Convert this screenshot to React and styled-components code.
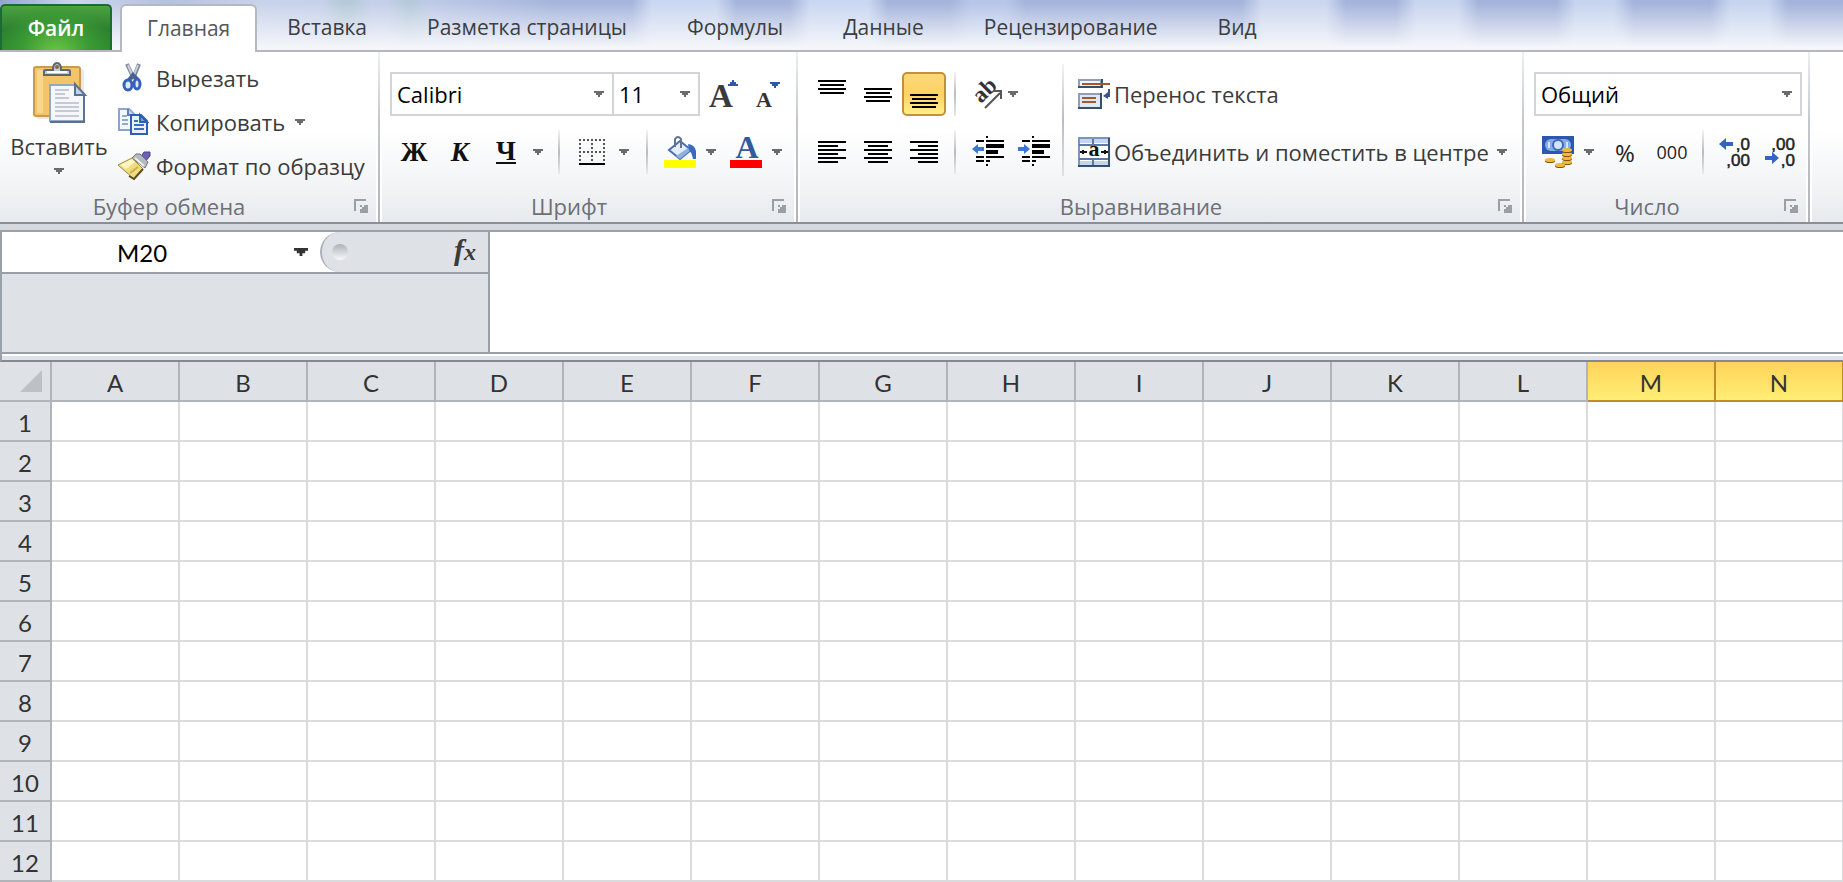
import React from "react";
import styled, { createGlobalStyle } from "styled-components";

const TABS = [
  "Главная",
  "Вставка",
  "Разметка страницы",
  "Формулы",
  "Данные",
  "Рецензирование",
  "Вид",
];
const COLUMNS = "ABCDEFGHIJKLMN".split("");
const SELECTED = ["M", "N"];
const ROWS = Array.from({ length: 12 }, (_, i) => i + 1);

const Caret = ({ width = 10, height = 6, color = "#6b6b6b" }) => (
  <svg width={width} height={height} viewBox="0 0 10 6" preserveAspectRatio="none">
    <path d="M0 0h10v2h-2v2h-2v2h-2v-2h-2v-2h-2z" fill={color} />
  </svg>
);

const PasteIcon = () => (
  <svg width="56" height="64" viewBox="-2 0 56 64">
    <rect x="3" y="7" width="48" height="50" rx="3" fill="#d9dade" opacity="0.6" />
    <rect x="1" y="5" width="46" height="49" rx="2" fill="#f3c568" stroke="#c99a55" strokeWidth="2" />
    <path d="M4 8h6v43h-6z" fill="#f8d68e" />
    <path d="M11 13v-4q0-1 2-1h7q0-7 4-7t4 7h7q2 0 2 1v4z" fill="#c4ccd6" stroke="#5c6775" strokeWidth="2" />
    <circle cx="24" cy="5" r="2" fill="#8a6a3a" />
    <path d="M14 10h20" stroke="#fff" strokeWidth="2" />
    <path d="M17 23h25l9 9v27h-34z" fill="#f5f7fb" stroke="#93a8c6" strokeWidth="2" />
    <path d="M51 33v27h-34" fill="none" stroke="#5b7190" strokeWidth="2" />
    <path d="M42 22v11h10z" fill="#c3d2e6" stroke="#5b7190" strokeWidth="2" />
    <path d="M22 28h14M22 32h10M22 36h14M22 41h24M22 45h24M22 49h24M22 54h24" stroke="#c6cad6" strokeWidth="2" />
  </svg>
);

const CutIcon = () => (
  <svg width="32" height="32" viewBox="-2 0 32 32">
    <path d="M7 2l7 15M19 2l-6 15" stroke="#7d8996" strokeWidth="4" />
    <path d="M8 3l5 12M18 3l-4 10" stroke="#c9d1da" strokeWidth="2" />
    <path d="M9 18l4-5 5 5" fill="none" stroke="#4b6190" strokeWidth="4" />
    <ellipse cx="8" cy="23" rx="4" ry="5" fill="#dfe8f8" stroke="#3461bd" strokeWidth="3" />
    <ellipse cx="17" cy="22" rx="3" ry="5" fill="#dfe8f8" stroke="#3461bd" strokeWidth="3" />
  </svg>
);

const CopyIcon = () => (
  <svg width="32" height="32" viewBox="0 0 32 32">
    <path d="M1 3h10l5 5v16h-15z" fill="#f4f8fd" stroke="#8aa5cf" strokeWidth="2" />
    <path d="M10 3v6h6" fill="#c7d8ee" stroke="#5e7fb5" strokeWidth="2" />
    <path d="M4 10h5M4 14h6M4 18h6" stroke="#8fa9cf" strokeWidth="2" />
    <path d="M13 9h10l6 6v13h-16z" fill="#e9f1fc" stroke="#2f5fb3" strokeWidth="2" />
    <path d="M22 9v7h7z" fill="#7fa3dd" stroke="#2f5fb3" strokeWidth="2" />
    <path d="M16 15h4M16 19h10M16 23h10" stroke="#3c6cbf" strokeWidth="2" />
  </svg>
);

const BrushIcon = () => (
  <svg width="32" height="32" viewBox="0 0 32 32">
    <path d="M22 8l4-6h6v4l-6 7z" fill="#6a61b5" stroke="#4a4390" />
    <path d="M14 8l4-4h4l8 8-3 6z" fill="#b5b9c0" stroke="#6f747c" />
    <path d="M17 8l9 8" stroke="#eceef0" strokeWidth="2" />
    <path d="M0 15l14-7 11 11-9 10z" fill="#efdc7e" stroke="#a58a3c" />
    <path d="M2 15l12-6 3 3-9 7z" fill="#fff6c4" />
    <path d="M12 23l8-6" stroke="#c9ae52" strokeWidth="2" />
    <path d="M11 26l5 3 9-10" fill="none" stroke="#5e4a20" strokeWidth="2" />
  </svg>
);

const GrowIcon = () => (
  <svg width="28" height="32" viewBox="0 0 28 32">
    <text x="-1" y="29" fontFamily="Liberation Serif, serif" fontWeight="700" fontSize="33" fill="#3b3b3b">A</text>
    <path d="M18 8h10v-2h-2v-2h-2v-2h-2v2h-2v2h-2z" fill="#2f56a8" />
  </svg>
);

const ShrinkIcon = () => (
  <svg width="24" height="32" viewBox="0 0 24 32">
    <text x="0" y="29" fontFamily="Liberation Serif, serif" fontWeight="700" fontSize="22" fill="#333">A</text>
    <path d="M14 4h10v2h-2v2h-2v2h-2v-2h-2v-2h-2z" fill="#2f56a8" />
  </svg>
);

const BorderIcon = () => (
  <svg width="26" height="26" viewBox="0 0 26 26">
    <path d="M0 1h26M0 13h26" stroke="#555" strokeWidth="2" strokeDasharray="2 2" />
    <path d="M1 0v24M13 0v24M25 0v24" stroke="#555" strokeWidth="2" strokeDasharray="2 2" />
    <path d="M0 25h26" stroke="#000" strokeWidth="2" />
  </svg>
);

const FillIcon = () => (
  <svg width="32" height="32" viewBox="0 0 32 32">
    <path d="M5 14l11-9 11 9-11 9z" fill="#e4edf9" stroke="#4a6fae" strokeWidth="2" />
    <path d="M16 23l11-9-3-2-12 8z" fill="#8fb0e0" />
    <path d="M11 11v-8q3-4 6 0v9" fill="none" stroke="#62748f" strokeWidth="2" />
    <path d="M24 8q7 1 8 7v8h-3q-1-6-4-9z" fill="#3a69bb" />
    <rect y="24" width="32" height="8" fill="#ffff00" />
  </svg>
);

const FontColorIcon = () => (
  <svg width="32" height="32" viewBox="0 0 32 32">
    <text x="17" y="22" textAnchor="middle" fontFamily="Liberation Serif, serif" fontWeight="700" fontSize="32" fill="#335a9e">A</text>
    <rect y="24" width="32" height="8" fill="#ff0000" />
  </svg>
);

const LinesIcon = ({ height, top, rows, short, align }) => (
  <svg width="28" height={height} viewBox={`0 0 28 ${height}`}>
    {Array.from({ length: rows }, (_, i) => {
      const w = i % 2 ? short : 28;
      const x = { left: 0, center: (28 - w) / 2, right: 28 - w }[align];
      return <rect key={i} x={x} y={top + i * 4} width={w} height="2" fill="#000" />;
    })}
  </svg>
);

const OrientationIcon = () => (
  <svg width="36" height="32" viewBox="0 0 36 32">
    <text x="15" y="26" transform="rotate(-45 15 26)" fontFamily="Liberation Serif, serif" fontWeight="700" fontSize="23" fill="#333">ab</text>
    <path d="M19 30l15-15M27 13h8v8" fill="none" stroke="#555" strokeWidth="2" />
  </svg>
);

const IndentIcon = ({ increase }) => (
  <svg width="32" height="32" viewBox="0 0 32 32">
    <path d="M4 5h8M14 5h18M4 21h8M14 21h18M4 25h8M14 25h4" stroke="#000" strokeWidth="2" />
    <path d="M14 10h18M14 16h12" stroke="#000" strokeWidth="4" />
    <path d="M15 0v2M15 4v2M15 24v2M15 28v2" stroke="#000" strokeWidth="2" />
    {increase ? (
      <path d="M12 13l-6-5v3h-6v4h6v3z" fill="#3f74d8" />
    ) : (
      <path d="M0 13l6-5v3h6v4h-6v3z" fill="#3f74d8" />
    )}
  </svg>
);

const WrapIcon = () => (
  <svg width="32" height="32" viewBox="0 0 32 32">
    <path d="M1 2h22v7h-22z" fill="#f2f6fb" stroke="#8f9fb8" strokeWidth="2" />
    <path d="M0 9h24v-8" fill="none" stroke="#35506f" strokeWidth="2" />
    <path d="M4 6h28" stroke="#a35a28" strokeWidth="2" />
    <path d="M1 16h22v14h-22z" fill="#dfe8f6" stroke="#8f9fb8" strokeWidth="2" />
    <path d="M0 30h23v-15" fill="none" stroke="#35506f" strokeWidth="2" />
    <path d="M4 20h14M4 24h14" stroke="#a35a28" strokeWidth="2" />
    <path d="M31 11v7h-3" fill="none" stroke="#3a5688" strokeWidth="2" />
    <path d="M25 18l5-4v7z" fill="#3a5688" />
  </svg>
);

const MergeIcon = () => (
  <svg width="32" height="32" viewBox="0 0 32 32">
    <rect x="1" y="2" width="30" height="28" fill="#fff" stroke="#7b95bd" strokeWidth="2" />
    <path d="M2 3h12v4h-12zM16 3h14v4h-14zM2 25h12v4h-12zM16 25h14v4h-14z" fill="#c4d5ee" />
    <path d="M1 9h30M1 23h30M15 3v6M15 23v6" stroke="#5b7aa8" strokeWidth="2" />
    <path d="M0 30h31v-28" fill="none" stroke="#35506f" strokeWidth="2" />
    <text x="16" y="20" textAnchor="middle" fontFamily="Liberation Serif, serif" fontWeight="700" fontSize="22" fill="#111">a</text>
    <path d="M2 16h7M23 16h7M5 14v4M27 14v4" stroke="#111" strokeWidth="2" />
  </svg>
);

const CurrencyIcon = () => (
  <svg width="32" height="32" viewBox="0 0 32 32">
    <rect width="32" height="18" fill="#2d56ae" />
    <rect x="3" y="3" width="26" height="12" rx="6" fill="#86abe6" />
    <ellipse cx="16" cy="9" rx="5" ry="5" fill="#d5e4fa" stroke="#3c69bd" strokeWidth="2" />
    <path d="M7 6v6M25 6v6" stroke="#d5e4fa" strokeWidth="2" />
    {[
      [25, 27],
      [25, 23],
      [25, 19],
      [25, 15],
      [8, 25],
      [18, 30],
    ].map(([x, y]) => (
      <g key={`${x}-${y}`}>
        <ellipse cx={x} cy={y} rx="5" ry="2" fill="#7a5310" />
        <ellipse cx={x} cy={y - 1} rx="5" ry="2" fill="#f0b93c" />
      </g>
    ))}
  </svg>
);

const DecimalIcon = ({ decrease }) => (
  <svg width="32" height="32" viewBox="0 0 32 32">
    <g fontFamily="Liberation Sans, sans-serif" fontSize="17" fill="#222" stroke="#222" strokeWidth="0.5" textAnchor="end">
      <text x="31" y="14">{decrease ? ",00" : ",0"}</text>
      <text x="31" y="30">{decrease ? ",0" : ",00"}</text>
    </g>
    {decrease ? (
      <path d="M15 22l-7-6v4h-7v4h7v4z" fill="#3564c4" />
    ) : (
      <path d="M0 8l7-6v4h7v4h-7v4z" fill="#3564c4" />
    )}
  </svg>
);

const LauncherIcon = () => (
  <svg width="14" height="14" viewBox="0 0 14 14">
    <path d="M1 12v-11h11" fill="none" stroke="#9b9ea3" strokeWidth="2" />
    <path d="M6 6h2v2h2v-2h4v8h-8v-4h2v-2h-2z" fill="#9b9ea3" />
  </svg>
);

const Group = ({ title, width, indent, children }) => (
  <>
    <GroupBox $width={width} aria-label={title}>
      <GroupBody $indent={indent}>{children}</GroupBody>
      <GroupFooter>
        <GroupTitle>{title}</GroupTitle>
        <Launcher aria-label={`${title}: параметры`}>
          <LauncherIcon />
        </Launcher>
      </GroupFooter>
    </GroupBox>
    <Divider />
  </>
);

const Combo = ({ label, value, width }) => (
  <ComboBox $width={width}>
    <select aria-label={label} defaultValue={value}>
      <option>{value}</option>
    </select>
    <Caret />
  </ComboBox>
);

const App = () => {
  return (
    <Page>
      <GlobalStyle />
      <TabBar>
        <FileTab>Файл</FileTab>
        {TABS.map((tab, i) => (
          <Tab key={tab} $active={i === 0}>
            {tab}
          </Tab>
        ))}
      </TabBar>
      <Ribbon>
        <Group title="Буфер обмена" width={376} indent={0}>
          <PasteButton>
            <PasteIcon />
            <span>Вставить</span>
            <Caret />
          </PasteButton>
          <Stack>
            <LabelButton $gap={6}>
              <CutIcon />
              Вырезать
            </LabelButton>
            <LabelButton $gap={6}>
              <CopyIcon />
              Копировать
              <Caret />
            </LabelButton>
            <LabelButton $gap={6}>
              <BrushIcon />
              Формат по образцу
            </LabelButton>
          </Stack>
        </Group>

        <Group title="Шрифт" width={412} indent={8}>
          <Rows>
            <Row>
              <Combo label="Шрифт" value="Calibri" width={224} />
              <Combo label="Размер шрифта" value="11" width={88} />
              <ToolButton $w={48} aria-label="Увеличить размер шрифта">
                <GrowIcon />
              </ToolButton>
              <ToolButton $w={40} aria-label="Уменьшить размер шрифта">
                <ShrinkIcon />
              </ToolButton>
            </Row>
            <Row>
              <LetterButton $w={48}>Ж</LetterButton>
              <LetterButton $w={44} $italic>
                К
              </LetterButton>
              <LetterButton $w={48} $underline>
                <span>Ч</span>
              </LetterButton>
              <ToolButton $w={16} aria-label="Подчеркивание">
                <Caret />
              </ToolButton>
              <Separator $gap={12} />
              <ToolButton $w={40} aria-label="Границы">
                <BorderIcon />
              </ToolButton>
              <ToolButton $w={24} aria-label="Выбор границ">
                <Caret />
              </ToolButton>
              <Separator $gap={10} />
              <ToolButton $w={44} aria-label="Цвет заливки">
                <FillIcon />
              </ToolButton>
              <ToolButton $w={18} aria-label="Выбор заливки">
                <Caret />
              </ToolButton>
              <ToolButton $w={52} aria-label="Цвет текста">
                <FontColorIcon />
              </ToolButton>
              <ToolButton $w={10} aria-label="Выбор цвета">
                <Caret />
              </ToolButton>
            </Row>
          </Rows>
        </Group>

        <Group title="Выравнивание" width={720} indent={10}>
          <Rows>
            <Row $gap={2}>
              <ToolButton $w={44} aria-label="По верхнему краю">
                <LinesIcon height={28} top={0} rows={4} short={24} align="center" />
              </ToolButton>
              <ToolButton $w={44} aria-label="По середине">
                <LinesIcon height={28} top={8} rows={4} short={24} align="center" />
              </ToolButton>
              <ToolButton $w={44} $active aria-label="По нижнему краю">
                <LinesIcon height={28} top={14} rows={4} short={24} align="center" />
              </ToolButton>
              <Separator $gap={6} />
              <ToolButton $w={40} aria-label="Ориентация">
                <OrientationIcon />
              </ToolButton>
              <ToolButton $w={14} aria-label="Выбор ориентации">
                <Caret />
              </ToolButton>
            </Row>
            <Row $gap={2}>
              <ToolButton $w={44} aria-label="По левому краю">
                <LinesIcon height={22} top={0} rows={6} short={20} align="left" />
              </ToolButton>
              <ToolButton $w={44} aria-label="По центру">
                <LinesIcon height={22} top={0} rows={6} short={20} align="center" />
              </ToolButton>
              <ToolButton $w={44} aria-label="По правому краю">
                <LinesIcon height={22} top={0} rows={6} short={20} align="right" />
              </ToolButton>
              <Separator $gap={6} />
              <ToolButton $w={48} aria-label="Уменьшить отступ">
                <IndentIcon />
              </ToolButton>
              <ToolButton $w={40} aria-label="Увеличить отступ">
                <IndentIcon increase />
              </ToolButton>
            </Row>
          </Rows>
          <TallSeparator />
          <Rows>
            <LabelButton $gap={4}>
              <WrapIcon />
              Перенос текста
            </LabelButton>
            <LabelButton $gap={4}>
              <MergeIcon />
              Объединить и поместить в центре
              <Caret />
            </LabelButton>
          </Rows>
        </Group>

        <Group title="Число" width={280} indent={8}>
          <Rows>
            <Row>
              <Combo label="Числовой формат" value="Общий" width={268} />
            </Row>
            <Row>
              <ToolButton $w={48} aria-label="Финансовый формат">
                <CurrencyIcon />
              </ToolButton>
              <ToolButton $w={14} aria-label="Выбор валюты">
                <Caret />
              </ToolButton>
              <NumberButton $w={58}>%</NumberButton>
              <NumberButton $w={36} $small>
                000
              </NumberButton>
              <Separator $gap={12} />
              <ToolButton $w={38} aria-label="Увеличить разрядность">
                <DecimalIcon />
              </ToolButton>
              <ToolButton $w={52} aria-label="Уменьшить разрядность">
                <DecimalIcon decrease />
              </ToolButton>
            </Row>
          </Rows>
        </Group>
      </Ribbon>

      <FormulaBar>
        <NamePanel>
          <NameRow>
            <NameInput aria-label="Имя" defaultValue="M20" />
            <NameArrow aria-label="Список имён">
              <Caret width={14} height={8} color="#333" />
            </NameArrow>
            <FxArea>
              <Knob />
              <FxButton>
                f<sub>x</sub>
              </FxButton>
            </FxArea>
          </NameRow>
        </NamePanel>
        <FormulaInput aria-label="Строка формул" />
      </FormulaBar>

      <SheetArea>
        <Sheet>
          <thead>
            <tr>
              <Corner>
                <svg width="22" height="22" viewBox="0 0 22 22">
                  <path d="M22 0v22h-22z" fill="#bcc1c7" />
                </svg>
              </Corner>
              {COLUMNS.map((c) => (
                <ColumnHead key={c} scope="col" $selected={SELECTED.includes(c)}>
                  {c}
                </ColumnHead>
              ))}
            </tr>
          </thead>
          <tbody>
            {ROWS.map((r) => (
              <tr key={r}>
                <RowHead scope="row">{r}</RowHead>
                {COLUMNS.map((c) => (
                  <Cell key={c} />
                ))}
              </tr>
            ))}
          </tbody>
        </Sheet>
      </SheetArea>
    </Page>
  );
};

export default App;

const GlobalStyle = createGlobalStyle`
  * {
    box-sizing: border-box;
  }
  body {
    margin: 0;
    background: #fff;
    font-family: "Open Sans", "Noto Sans", sans-serif;
    font-size: 22px;
    color: #3b3b3b;
  }
  button, input, select, textarea {
    font: inherit;
    color: inherit;
    margin: 0;
    padding: 0;
    border: none;
    border-radius: 0;
    background: none;
    outline: none;
  }
  svg {
    display: block;
    flex: none;
    overflow: visible;
  }
`;

const Page = styled.div`
  width: 100%;
  overflow: hidden;
`;

const patch = (color, from, to) =>
  `linear-gradient(90deg, transparent ${from}px, ${color} ${from + 20}px, ${color} ${to - 20}px, transparent ${to}px)`;

const TabBar = styled.div`
  display: flex;
  align-items: flex-end;
  height: 52px;
  padding-top: 4px;
  border-bottom: 2px solid #b5b8bc;
  font-size: 21px;
  background:
    linear-gradient(180deg, #f4f6fa00 5%, #f4f6fa 95%),
    ${patch("#a9c4cb88", 322, 372)},
    ${patch("#a9c4cb88", 388, 430)},
    ${patch("#cad7f1", 632, 736)},
    ${patch("#cad7f1", 790, 888)},
    ${patch("#b6c5e8", 950, 1026)},
    ${patch("#cbd6ee", 1242, 1346)},
    ${patch("#c9d5ef", 1396, 1478)},
    ${patch("#c6d4ef", 1556, 1634)},
    ${patch("#c6d4ef", 1710, 1788)},
    linear-gradient(90deg, #93a5cf 0px, #cdd6ec 74px, #b4c1e0 166px, #c8d2ea 258px, #c3cee9 405px, #a6b5dc 553px, #a3b2da 100%);
`;

const FileTab = styled.button`
  width: 112px;
  height: 46px;
  border: 2px solid #1d6b34;
  border-bottom: none;
  border-radius: 5px 5px 0 0;
  background: radial-gradient(ellipse at 50% 110%, #6cc846 0%, #3b9a34 45%, transparent 75%),
    linear-gradient(180deg, #4ba23f 0%, #2e8230 50%, #2e8a30 100%);
  color: #fff;
  font-weight: 600;
  margin-right: 8px;
`;

const Tab = styled.button`
  height: ${({ $active }) => ($active ? 48 : 46)}px;
  padding: ${({ $active }) => ($active ? "0 25px 2px" : "0 30px")};
  margin-bottom: ${({ $active }) => ($active ? -2 : 0)}px;
  border: ${({ $active }) => ($active ? "2px solid #b5b8bc" : "none")};
  border-bottom: none;
  border-radius: 6px 6px 0 0;
  background: ${({ $active }) => ($active ? "#fff" : "none")};
  color: ${({ $active }) => ($active ? "#55585c" : "#3b3e42")};
  white-space: nowrap;
`;

const Ribbon = styled.div`
  display: flex;
  height: 178px;
  border-bottom: 6px solid #d6dadf;
  box-shadow: inset 0 -2px #8a8f96;
  background: linear-gradient(180deg, #fff 0%, #fff 45%, #f1f3f5 80%, #e6e9ed 100%);
`;

const GroupBox = styled.section`
  display: flex;
  flex-direction: column;
  flex: none;
  width: ${({ $width }) => $width}px;
`;

const GroupBody = styled.div`
  display: flex;
  flex: 1;
  padding-left: ${({ $indent }) => $indent}px;
`;

const GroupFooter = styled.div`
  display: flex;
  align-items: center;
  gap: 16px;
  height: 32px;
  padding-right: 8px;
  margin-bottom: 2px;
`;

const GroupTitle = styled.div`
  flex: 1;
  text-align: center;
  color: #6d7078;
`;

const Launcher = styled.button`
  display: flex;
`;

const Divider = styled.div`
  flex: none;
  width: 2px;
  margin: 0 2px 2px;
  background: linear-gradient(180deg, #eceef0 0%, #c4c8cd 40%, #b0b4ba 100%);
  box-shadow: -2px 0 #fff, 2px 0 #fff;
`;

const PasteButton = styled.button`
  display: flex;
  flex-direction: column;
  align-items: center;
  width: 118px;
  padding-top: 10px;
  span {
    line-height: 28px;
    margin: 6px 0 8px;
  }
`;

const Stack = styled.div`
  display: flex;
  flex-direction: column;
  padding-top: 4px;
`;

const LabelButton = styled.button`
  display: flex;
  align-items: center;
  gap: ${({ $gap }) => $gap}px;
  height: 44px;
  white-space: nowrap;
  svg + svg,
  svg:last-child:not(:first-child) {
    margin-left: 4px;
  }
`;

const Rows = styled.div`
  display: flex;
  flex-direction: column;
  gap: 14px;
  padding-top: 20px;
`;

const Row = styled.div`
  display: flex;
  align-items: center;
  gap: ${({ $gap = 0 }) => $gap}px;
  height: 44px;
`;

const ComboBox = styled.div`
  display: flex;
  align-items: center;
  width: ${({ $width }) => $width}px;
  height: 44px;
  padding-right: 8px;
  border: 2px solid #d2d4d7;
  background: #fff;
  color: #000;
  & + & {
    margin-left: -2px;
  }
  select {
    flex: 1;
    min-width: 0;
    height: 100%;
    padding-left: 5px;
    appearance: none;
  }
`;

const ToolButton = styled.button`
  display: flex;
  align-items: center;
  justify-content: center;
  flex: none;
  width: ${({ $w }) => $w}px;
  height: 44px;
  border-radius: 5px;
  border: ${({ $active }) => ($active ? "2px solid #c2923a" : "none")};
  background: ${({ $active }) =>
    $active ? "linear-gradient(180deg, #fbd877 0%, #fdd264 50%, #ffee86 100%)" : "none"};
`;

const LetterButton = styled(ToolButton)`
  font-family: "Liberation Serif", serif;
  font-size: 27px;
  font-weight: 700;
  font-style: ${({ $italic }) => ($italic ? "italic" : "normal")};
  color: #111;
  span {
    line-height: 22px;
    border-bottom: ${({ $underline }) => ($underline ? "2px solid #111" : "none")};
  }
`;

const NumberButton = styled(ToolButton)`
  font-size: ${({ $small }) => ($small ? 18 : 24)}px;
  color: #222;
`;

const Separator = styled.div`
  flex: none;
  width: 2px;
  height: 44px;
  margin: 0 ${({ $gap }) => $gap}px;
  background: linear-gradient(180deg, #f4f4f6 0%, #b9bcc1 50%, #e8eaec 100%);
`;

const TallSeparator = styled.div`
  width: 2px;
  height: 112px;
  margin: 12px 14px 0 8px;
  background: linear-gradient(180deg, #f4f4f6 0%, #b9bcc1 50%, #e0e2e5 100%);
`;

const FormulaBar = styled.div`
  display: flex;
  height: 132px;
  border: 2px solid #9aa0a8;
  border-right: none;
  border-bottom-color: #86898d;
  background: linear-gradient(#9aa0a8, #9aa0a8) 0 120px / 100% 2px no-repeat,
    linear-gradient(180deg, #fff 124px, #dfe3ee 124px);
`;

const NamePanel = styled.div`
  flex: none;
  width: 488px;
  height: 120px;
  border-right: 2px solid #9aa0a8;
  background: #dee2e7;
`;

const NameRow = styled.div`
  display: flex;
  height: 42px;
  border-bottom: 2px solid #9aa0a8;
  background: #fff;
`;

const NameInput = styled.input`
  width: 280px;
  text-align: center;
  font-family: Lato, sans-serif;
  font-size: 24px;
  color: #000;
`;

const NameArrow = styled.button`
  display: flex;
  align-items: center;
  justify-content: center;
  width: 38px;
`;

const FxArea = styled.div`
  display: flex;
  align-items: center;
  justify-content: space-between;
  flex: 1;
  padding: 0 12px 0 10px;
  border-left: 2px solid #aeb3b9;
  border-radius: 20px 0 0 20px;
  background: #dee2e7;
`;

const Knob = styled.div`
  width: 16px;
  height: 16px;
  border-radius: 50%;
  background: linear-gradient(180deg, #aeb2b7 0%, #d3d6d9 50%, #f7f8f9 100%);
`;

const FxButton = styled.button`
  font-family: "Liberation Serif", serif;
  font-size: 30px;
  font-weight: 700;
  font-style: italic;
  line-height: 32px;
  padding-bottom: 4px;
  sub {
    font-size: 24px;
    line-height: 0;
    vertical-align: baseline;
  }
`;

const FormulaInput = styled.textarea`
  flex: 1;
  height: 120px;
  resize: none;
`;

const SheetArea = styled.div`
  overflow: hidden;
`;

const Sheet = styled.table`
  table-layout: fixed;
  width: 1844px;
  border-collapse: separate;
  border-spacing: 0;
  font-family: Lato, sans-serif;
  font-size: 24px;
  line-height: 28px;
  th {
    padding: 4px 0 0;
    font-weight: 400;
    color: #333;
  }
`;

const Corner = styled.td`
  width: 52px;
  height: 40px;
  padding: 0 8px 0 20px;
  border-right: 2px solid #b1b5ba;
  border-bottom: 2px solid #b1b5ba;
  background: #dee2e7;
`;

const ColumnHead = styled.th`
  width: 128px;
  height: 40px;
  border-right: 2px solid ${({ $selected }) => ($selected ? "#c28a2c" : "#b1b5ba")};
  border-bottom: 2px solid ${({ $selected }) => ($selected ? "#c28a2c" : "#b1b5ba")};
  background: ${({ $selected }) =>
    $selected ? "linear-gradient(180deg, #ffd35a 0%, #ffee74 100%)" : "#dee2e7"};
`;

const RowHead = styled.th`
  height: 40px;
  border-right: 2px solid #b1b5ba;
  border-bottom: 2px solid #b1b5ba;
  background: #dee2e7;
`;

const Cell = styled.td`
  padding: 0;
  border-right: 2px solid #dadbdc;
  border-bottom: 2px solid #dadbdc;
`;
